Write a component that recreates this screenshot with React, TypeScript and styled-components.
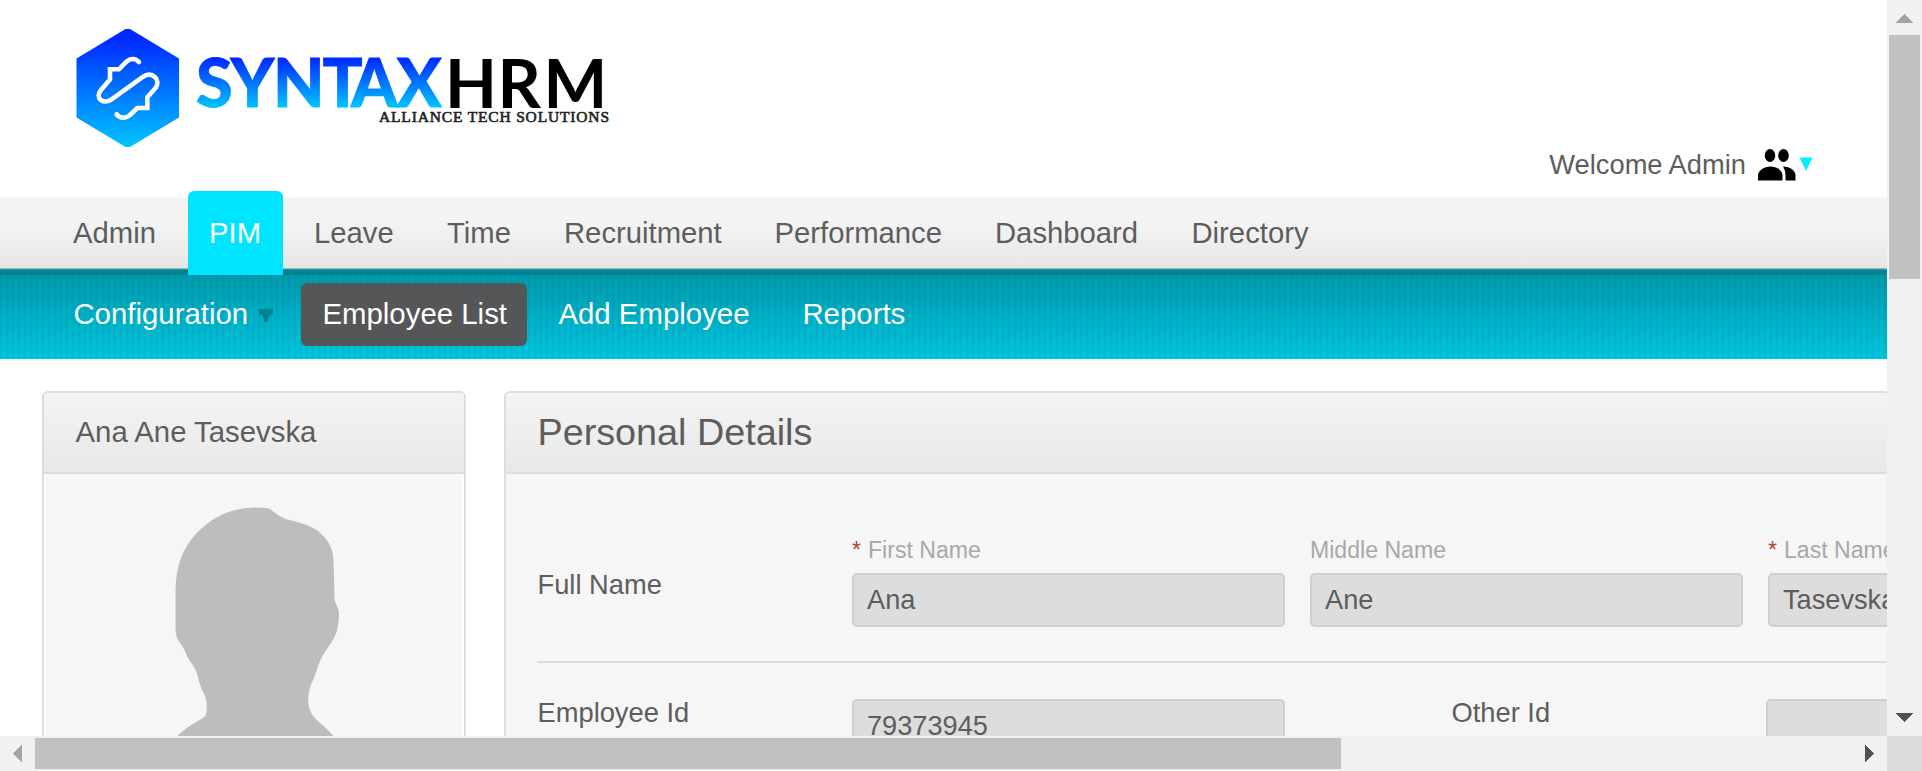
import React from 'react';
import styled, { createGlobalStyle, css } from 'styled-components';

const GlobalStyle = createGlobalStyle`
  *, *::before, *::after { box-sizing: border-box; }
  html, body { margin: 0; padding: 0; overflow: hidden; }
  body { font-family: "Liberation Sans", Arial, sans-serif; color: #5d5d5d; background: #fff; }
`;

const Screen = styled.div`
  display: grid;
  grid-template-columns: 1887px 35px;
  grid-template-rows: 736px 35px;
  width: 1922px;
  height: 771px;
  overflow: hidden;
`;

const Page = styled.div`
  display: flex;
  flex-direction: column;
  min-width: 0;
  overflow: hidden;
  background: #fff;
`;

const Header = styled.header`
  display: flex;
  justify-content: space-between;
  height: 197px;
  flex: none;
  padding: 27px 74px 0 75px;
`;

const LogoArt = styled.svg`
  display: block;
  width: 540px;
  height: 124px;
`;

const Welcome = styled.div`
  display: flex;
  align-items: flex-start;
  padding-top: 121px;
`;

const WelcomeText = styled.span`
  font-size: 27.3px;
  line-height: 34px;
  white-space: nowrap;
  margin-right: 11px;
`;

const PeopleArt = styled.svg`
  width: 40px;
  height: 34px;
  margin-right: 2px;
`;

const CaretArt = styled.svg<{ $top: number }>`
  display: block;
  width: 14px;
  height: 14px;
  margin-top: ${(p) => p.$top}px;
`;

const MainNav = styled.nav`
  display: flex;
  flex: none;
  gap: 10px;
  height: 78px;
  padding-left: 52px;
  background: linear-gradient(
    to bottom,
    #f7f7f7 0, #f3f3f3 2px, #f3f3f3 28px, #e6e6e6 71px,
    #94bcc2 71px, #94bcc2 72px, #2c929f 72px, #2c929f 73px,
    #088795 73px, #008290 75px, #008290 78px
  );
`;

const MainTab = styled.a<{ $active?: boolean; $width: number }>`
  width: ${(p) => p.$width}px;
  height: 78px;
  padding-left: 21px;
  font-size: 29.25px;
  line-height: 34px;
  padding-top: 19px;
  white-space: nowrap;
  ${(p) => p.$active && css`
    height: 84px;
    margin-top: -6px;
    padding-top: 25px;
    background: #00e5ff;
    color: #fff;
    border-radius: 6px 6px 0 0;
  `}
`;

const SubNav = styled.nav`
  display: flex;
  flex: none;
  height: 84px;
  padding: 8px 0 0 52px;
  gap: 10px;
  background:
    repeating-linear-gradient(to right, rgba(0, 60, 80, 0.08) 0, rgba(0, 60, 80, 0.08) 2px, transparent 3px, transparent 5px, rgba(0, 60, 80, 0.08) 6px),
    linear-gradient(to bottom, #009bad, #00c8e2);
`;

const SubTab = styled.a<{ $active?: boolean; $width: number }>`
  display: flex;
  width: ${(p) => p.$width}px;
  height: 63px;
  padding: 14px 0 0 21.4px;
  gap: 10.5px;
  font-size: 29.4px;
  line-height: 34px;
  white-space: nowrap;
  color: #fff;
  border-radius: 6px;
  background: ${(p) => (p.$active ? '#555658' : 'transparent')};
`;

const Content = styled.main`
  display: flex;
  flex: none;
  align-items: flex-start;
  gap: 38px;
  padding: 32px 0 0 42px;
`;

const Panel = styled.section<{ $width: number }>`
  flex: none;
  width: ${(p) => p.$width}px;
  height: 420px;
  border: 2px solid #ddd;
  border-radius: 6px;
  background: #f6f6f6;
  overflow: hidden;
`;

const PanelHead = styled.header`
  height: 81px;
  border-bottom: 2px solid #ddd;
  background: linear-gradient(to bottom, #f4f4f4, #e8e8e8);
`;

const PersonName = styled.h1`
  margin: 0;
  padding: 22px 0 0 31.5px;
  font-size: 29.35px;
  font-weight: 400;
  line-height: 34px;
`;

const PanelTitle = styled.h1`
  margin: 0;
  padding: 18px 0 0 31.5px;
  font-size: 37.75px;
  font-weight: 400;
  line-height: 43px;
`;

const Photo = styled.div`
  height: 337px;
  padding: 33px 0 0 131px;
  box-shadow: inset 2px 0 0 #fff, inset -2px 0 0 #fff;
`;

const Form = styled.div`
  padding: 62px 0 0 31px;
`;

const NameRow = styled.div`
  display: flex;
  height: 127px;
  border-bottom: 2px solid #ddd;
`;

const IdRow = styled.div`
  display: flex;
  padding-top: 36px;
`;

const Label = styled.label<{ $width: number }>`
  flex: none;
  width: ${(p) => p.$width}px;
  padding-left: 0.5px;
  font-size: 27.3px;
  line-height: 32px;
`;

const NameLabel = styled(Label)`
  padding-top: 33px;
`;

const IdLabel = styled(Label)`
  margin-top: -2px;
`;

const Field = styled.div`
  flex: none;
  width: 433px;
  margin-right: 25px;
`;

const Hint = styled.div`
  display: flex;
  gap: 7px;
  height: 37px;
  font-size: 23.1px;
  line-height: 28px;
  color: #a8a8a8;
  white-space: nowrap;
`;

const Star = styled.em`
  font-style: normal;
  color: #aa4935;
`;

const Input = styled.div`
  flex: none;
  width: 433px;
  height: 54px;
  padding: 9px 0 0 13px;
  border: 2px solid #cfcfcf;
  border-radius: 5px;
  background: #ddd;
  font-size: 27.2px;
  line-height: 32px;
  white-space: nowrap;
`;

const OtherIdGroup = styled.div`
  display: flex;
  flex: none;
  margin-left: 166px;
`;

const VerticalTrack = styled.div`
  display: flex;
  flex-direction: column;
  align-items: center;
  background: #f1f1f1;
`;

const VerticalThumb = styled.div`
  width: 31px;
  height: 244px;
  background: #c1c1c1;
`;

const HorizontalTrack = styled.div`
  display: flex;
  align-items: center;
  background: #f1f1f1;
`;

const HorizontalThumb = styled.div`
  width: 1306px;
  height: 31px;
  background: #c1c1c1;
`;

const Spacer = styled.div`
  flex: 1;
`;

const Corner = styled.div`
  background: #dcdcdc;
`;

const ArrowArt = styled.svg`
  display: block;
  flex: none;
  width: 35px;
  height: 35px;
`;

const Arrow = ({ points, color }: { points: string; color: string }) => (
  <ArrowArt viewBox="0 0 35 35" shapeRendering="crispEdges"><polygon points={points} fill={color} /></ArrowArt>
);

const Logo = () => (
  <LogoArt viewBox="75 27 540 124">
    <defs>
      <linearGradient id="brand" gradientUnits="userSpaceOnUse" x1="0" y1="29" x2="0" y2="147">
        <stop offset="0.08" stopColor="#0029ff" />
        <stop offset="1" stopColor="#00c6ff" />
      </linearGradient>
      <linearGradient id="word" gradientUnits="userSpaceOnUse" x1="0" y1="57" x2="0" y2="107">
        <stop offset="0.06" stopColor="#002dff" />
        <stop offset="1" stopColor="#00c3ff" />
      </linearGradient>
    </defs>
    <path d="M125.500 29h4.500l49 29.500v59l-49 29.500h-4.500l-49-29.500v-59z" fill="url(#brand)" />
    <path
      d="M139 62C135 57.500 130 58.500 126.700 61.500L119 69.300H110V79.500L101 90C94.500 98 103 104.500 110.500 100L143.500 76.500C153 71 160.500 80 156 87.500L147.300 97.300V108H137.300L129.500 115.500C125 119 119.500 118 116.700 114.300"
      fill="none" stroke="#fff" strokeWidth="4.600" strokeLinecap="round" strokeLinejoin="miter"
    />
    <text x="196 230.5 273 322.5 351 396.500" y="106.500" fontFamily="Lato, sans-serif" fontWeight="900" fontSize="66.500" fill="url(#word)" stroke="url(#word)" strokeWidth="0.800">SYNTAX</text>
    <text x="445 497.5 543.500" y="107.500" fontFamily="Lato, sans-serif" fontWeight="700" fontSize="67.500" fill="#000">HRM</text>
    <text x="379" y="122" fontFamily="Liberation Serif, serif" fontSize="15.500" fill="#222" stroke="#222" strokeWidth="0.600" textLength="230" lengthAdjust="spacing">ALLIANCE TECH SOLUTIONS</text>
  </LogoArt>
);

const mainTabs = [
  { name: 'Admin', width: 126 },
  { name: 'PIM', width: 95, active: true },
  { name: 'Leave', width: 123 },
  { name: 'Time', width: 107 },
  { name: 'Recruitment', width: 200.5 },
  { name: 'Performance', width: 210.5 },
  { name: 'Dashboard', width: 186.5 },
  { name: 'Directory', width: 160 },
];

const nameFields = [
  { hint: 'First Name', value: 'Ana', required: true },
  { hint: 'Middle Name', value: 'Ane', required: false },
  { hint: 'Last Name', value: 'Tasevska', required: true },
];

export default function App() {
  return (
    <>
      <GlobalStyle />
      <Screen>
        <Page>
          <Header>
            <Logo />
            <Welcome>
              <WelcomeText>Welcome Admin</WelcomeText>
              <PeopleArt viewBox="0 0 40 34">
                <ellipse cx="13" cy="7.500" rx="5.300" ry="6.500" />
                <ellipse cx="26.500" cy="7.500" rx="5.300" ry="6.500" />
                <path d="M1 32.500v-5c0-5 6-9 12.500-9S25.500 22.500 25.500 27.500v5z" />
                <path d="M26 18.500c7 0 12.500 4 12.500 9v5H28.500v-5c0-4-1-6.500-2.500-9z" />
              </PeopleArt>
              <CaretArt $top={9} viewBox="0 0 14 14"><path d="M0.500 0.500h13l-6.500 13.500z" fill="#00f0ff" /></CaretArt>
            </Welcome>
          </Header>
          <MainNav>
            {mainTabs.map((t) => (
              <MainTab key={t.name} $width={t.width} $active={t.active}>{t.name}</MainTab>
            ))}
          </MainNav>
          <SubNav>
            <SubTab $width={239}>
              Configuration
              <CaretArt $top={12} viewBox="0 0 14 14"><path d="M0 0h14v5l-3 1-2 4v3H5v-3L3 6 0 5z" fill="#008290" /></CaretArt>
            </SubTab>
            <SubTab $width={226} $active>Employee List</SubTab>
            <SubTab $width={234}>Add Employee</SubTab>
            <SubTab $width={160}>Reports</SubTab>
          </SubNav>
          <Content>
            <Panel $width={424}>
              <PanelHead><PersonName>Ana Ane Tasevska</PersonName></PanelHead>
              <Photo>
                <svg width="166" height="240" viewBox="175 507 166 240">
                  <path
                    d="M243 508.500Q257 506.500 269 508.500C274 511 278 517 289 520C302 523 309 525 318 531C329 540 333 549 333.500 560L334.500 598C335 605 339 607 339 613C339 628 336 637 329 646C318 661 319 666 314 678C306 694 308 704 310 710C315 722 322 722 333 735.500L345 748H165L178 735.500C193 722 198 722 205.500 716C208 707 207 698 202 690C197 679 199 673 192 664C186 657 186 650 180 643C175 637 175.500 630 175.500 620V590C176 568 182 549 195 535C210 519 225 511 243 508.500Z"
                    fill="#bdbdbd"
                  />
                </svg>
              </Photo>
            </Panel>
            <Panel $width={1800}>
              <PanelHead><PanelTitle>Personal Details</PanelTitle></PanelHead>
              <Form>
                <NameRow>
                  <NameLabel $width={315}>Full Name</NameLabel>
                  {nameFields.map((f) => (
                    <Field key={f.hint}>
                      <Hint>{f.required && <Star>*</Star>}{f.hint}</Hint>
                      <Input>{f.value}</Input>
                    </Field>
                  ))}
                </NameRow>
                <IdRow>
                  <IdLabel $width={315}>Employee Id</IdLabel>
                  <Input>79373945</Input>
                  <OtherIdGroup>
                    <IdLabel $width={315}>Other Id</IdLabel>
                    <Input />
                  </OtherIdGroup>
                </IdRow>
              </Form>
            </Panel>
          </Content>
        </Page>
        <VerticalTrack>
          <Arrow points="9,23 26,23 17.5,14" color="#a3a3a3" />
          <VerticalThumb />
          <Spacer />
          <Arrow points="9,12 26,12 17.5,21" color="#505050" />
        </VerticalTrack>
        <HorizontalTrack>
          <Arrow points="22,9 22,26 13,17.5" color="#a3a3a3" />
          <HorizontalThumb />
          <Spacer />
          <Arrow points="13,9 13,26 22,17.5" color="#505050" />
        </HorizontalTrack>
        <Corner />
      </Screen>
    </>
  );
}
